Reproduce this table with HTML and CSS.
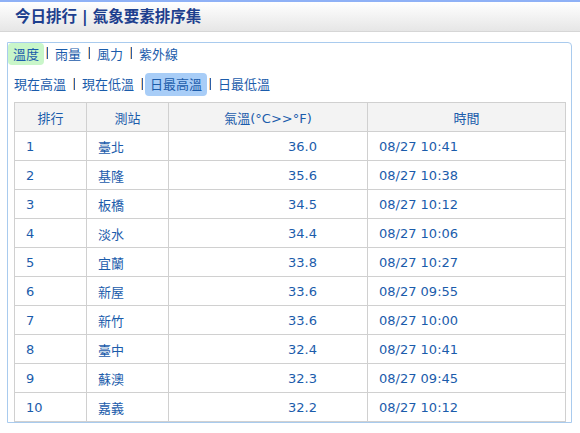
FILE: index.html
```html
<!DOCTYPE html>
<html lang="zh-Hant">
<head>
<meta charset="utf-8">
<title>今日排行</title>
<link rel="stylesheet" href="styles.css">
</head>
<body>
<header class="topbar">
  <h1 class="title">今日排行<span class="title-bar">|</span>氣象要素排序集</h1>
</header>
<main class="panel">
  <nav class="tabs tabs-main">
    <span class="tab tab-green">溫度</span><span class="sep"></span>
    <span class="tab">雨量</span><span class="sep"></span>
    <span class="tab">風力</span><span class="sep"></span>
    <span class="tab">紫外線</span>
  </nav>
  <nav class="tabs tabs-sub">
    <span class="tab">現在高溫</span><span class="sep"></span>
    <span class="tab">現在低溫</span><span class="sep"></span>
    <span class="tab tab-blue">日最高溫</span><span class="sep"></span>
    <span class="tab">日最低溫</span>
  </nav>
  <table class="rank">
    <colgroup>
      <col class="c-rank"><col class="c-station"><col class="c-temp"><col class="c-time">
    </colgroup>
    <thead>
      <tr><th>排行</th><th>測站</th><th>氣溫(°C&gt;&gt;°F)</th><th>時間</th></tr>
    </thead>
    <tbody>
      <tr><td>1</td><td>臺北</td><td class="num">36.0</td><td>08/27 10:41</td></tr>
      <tr><td>2</td><td>基隆</td><td class="num">35.6</td><td>08/27 10:38</td></tr>
      <tr><td>3</td><td>板橋</td><td class="num">34.5</td><td>08/27 10:12</td></tr>
      <tr><td>4</td><td>淡水</td><td class="num">34.4</td><td>08/27 10:06</td></tr>
      <tr><td>5</td><td>宜蘭</td><td class="num">33.8</td><td>08/27 10:27</td></tr>
      <tr><td>6</td><td>新屋</td><td class="num">33.6</td><td>08/27 09:55</td></tr>
      <tr><td>7</td><td>新竹</td><td class="num">33.6</td><td>08/27 10:00</td></tr>
      <tr><td>8</td><td>臺中</td><td class="num">32.4</td><td>08/27 10:41</td></tr>
      <tr><td>9</td><td>蘇澳</td><td class="num">32.3</td><td>08/27 09:45</td></tr>
      <tr><td>10</td><td>嘉義</td><td class="num">32.2</td><td>08/27 10:12</td></tr>
    </tbody>
  </table>
</main>
</body>
</html>
```
FILE: styles.css
```css
html, body {
  margin: 0;
  padding: 0;
  background: #ffffff;
}
body {
  font-family: "DejaVu Sans", "Noto Sans CJK TC", sans-serif;
  font-size: 13px;
  color: #1b5cab;
}
.topbar {
  border-top: 2px solid #8fb1f6;
  height: 29px;
  background: linear-gradient(#ffffff, #e6e6e6);
  border-bottom: 1px solid #d6d6d6;
  box-shadow: 0 1px 0 #ffffff;
  display: flex;
  align-items: center;
  padding-left: 15px;
}
.title {
  margin: 0;
  font-size: 15.5px;
  font-weight: bold;
  color: #1d3f8e;
  line-height: 20px;
}
.title-bar {
  margin: 0 5px;
}
.panel {
  margin: 10px 8px 0 7px;
  border: 1px solid #a9cbee;
  border-radius: 0 4px 0 0;
  height: 379px;
  display: flex;
  flex-direction: column;
}
.tabs {
  display: flex;
  align-items: center;
}
.tabs-main {
  height: 22px;
}
.tabs-sub {
  margin-top: 8px;
  height: 23px;
  padding-left: 1px;
}
.tab {
  padding: 0 5px;
  height: 100%;
  display: flex;
  align-items: center;
  border-radius: 4px;
  line-height: 1;
}
.tab-green {
  background: #c9f6c9;
}
.tab-blue {
  background: #a8cdf7;
}
.sep {
  width: 1px;
  height: 12px;
  margin: 0 2px 2px 3px;
  background: #2d5fa8;
  box-shadow: -1px 0 0 #f1c89a;
}
.rank {
  margin: 6px 0 0 6px;
  width: 551px;
  table-layout: fixed;
  border-collapse: collapse;
}
.c-rank { width: 72px; }
.c-station { width: 82px; }
.c-temp { width: 199px; }
.c-time { width: 198px; }
.rank th, .rank td {
  border: 1px solid #d0d0d0;
  height: 28px;
  padding: 0 11px;
  font-weight: normal;
  text-align: left;
  white-space: nowrap;
}
.rank th {
  background: #f3f3f3;
  text-align: center;
  padding: 0;
}
.rank td.num {
  text-align: right;
  padding-right: 50px;
}
```
